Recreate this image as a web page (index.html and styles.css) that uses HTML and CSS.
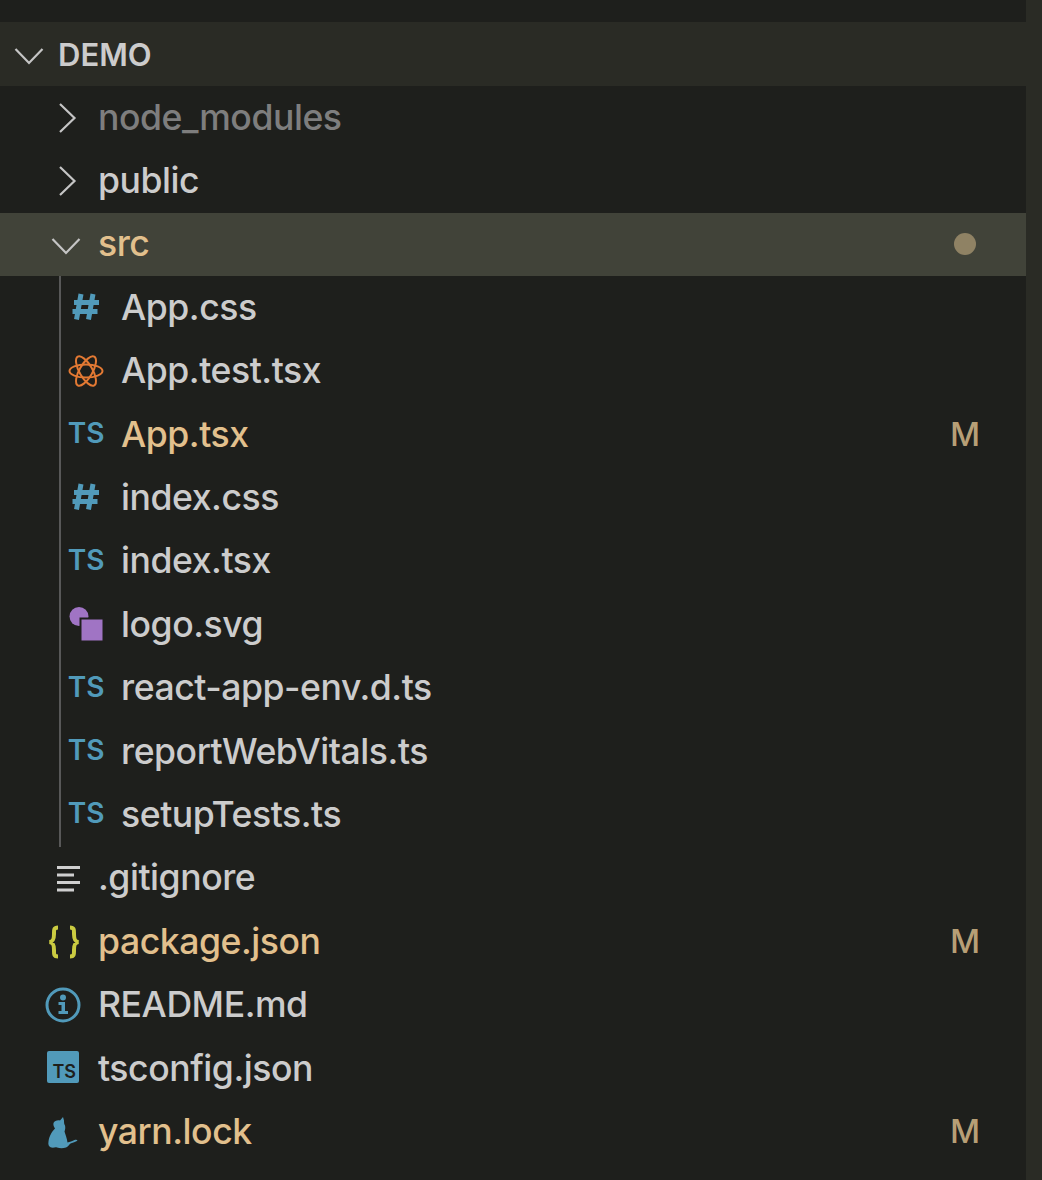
FILE: index.html
```html
<!DOCTYPE html>
<html lang="en">
<head>
<meta charset="utf-8">
<title>Explorer</title>
<link rel="stylesheet" href="styles.css">
</head>
<body>
<div class="explorer">
  <div class="top-gap"></div>
  <div class="header">
    <span class="slot"><svg class="icon" viewBox="0 0 40 40"><path class="chev" d="M8.5 15 22 29 35.500 15"/></svg></span>
    <span class="title">DEMO</span>
  </div>
  <div class="list">
    <div class="row dim">
      <span class="slot"><svg class="icon" viewBox="0 0 40 40"><path class="chev" d="M16 6 30.500 20 16 34"/></svg></span>
      <span class="name">node_modules</span>
    </div>
    <div class="row">
      <span class="slot"><svg class="icon" viewBox="0 0 40 40"><path class="chev" d="M16 6 30.500 20 16 34"/></svg></span>
      <span class="name">public</span>
    </div>
    <div class="row selected modified">
      <span class="slot"><svg class="icon" viewBox="0 0 40 40"><path class="chev" d="M8.5 15 22 29 35.500 15"/></svg></span>
      <span class="name">src</span>
      <span class="status"><span class="dot"></span></span>
    </div>
    <div class="group">
      <div class="row child">
        <span class="slot"><svg class="icon" viewBox="0 0 40 40"><path class="hash" d="M15 6 10.500 31.500M27 6 22.500 31.500M8 14.500H33M6.500 23.500H31.500"/></svg></span>
        <span class="name">App.css</span>
      </div>
      <div class="row child">
        <span class="slot"><svg class="icon" viewBox="0 0 40 40"><g class="react"><ellipse cx="20" cy="20" rx="16.500" ry="6.500"/><ellipse cx="20" cy="20" rx="16.500" ry="6.500" transform="rotate(60 20 20)"/><ellipse cx="20" cy="20" rx="16.500" ry="6.500" transform="rotate(120 20 20)"/></g></svg></span>
        <span class="name">App.test.tsx</span>
      </div>
      <div class="row child modified">
        <span class="slot"><span class="ts">TS</span></span>
        <span class="name">App.tsx</span>
        <span class="status">M</span>
      </div>
      <div class="row child">
        <span class="slot"><svg class="icon" viewBox="0 0 40 40"><path class="hash" d="M15 6 10.500 31.500M27 6 22.500 31.500M8 14.500H33M6.500 23.500H31.500"/></svg></span>
        <span class="name">index.css</span>
      </div>
      <div class="row child">
        <span class="slot"><span class="ts">TS</span></span>
        <span class="name">index.tsx</span>
      </div>
      <div class="row child">
        <span class="slot"><svg class="icon" viewBox="0 0 40 40"><circle class="purple" cx="13" cy="11.500" r="9.500"/><rect class="purple-square" x="14.500" y="13.500" width="23" height="23"/></svg></span>
        <span class="name">logo.svg</span>
      </div>
      <div class="row child">
        <span class="slot"><span class="ts">TS</span></span>
        <span class="name">react-app-env.d.ts</span>
      </div>
      <div class="row child">
        <span class="slot"><span class="ts">TS</span></span>
        <span class="name">reportWebVitals.ts</span>
      </div>
      <div class="row child">
        <span class="slot"><span class="ts">TS</span></span>
        <span class="name">setupTests.ts</span>
      </div>
    </div>
    <div class="row">
      <span class="slot"><svg class="icon" viewBox="0 0 40 40"><path class="lines" d="M13 9.500H36M13 17H30M13 24.500H36M13 32H30"/></svg></span>
      <span class="name">.gitignore</span>
    </div>
    <div class="row modified">
      <span class="slot"><svg class="icon" viewBox="0 0 40 40"><path class="brace" d="M14 5.500C9.500 5.500 10 8 10 12 10 16.500 9.500 19.500 5.500 20 9.500 20.500 10 23.500 10 28 10 32 9.500 34.500 14 34.500M26 5.500C30.500 5.500 30 8 30 12 30 16.500 30.500 19.500 34.500 20 30.500 20.500 30 23.500 30 28 30 32 30.500 34.500 26 34.500"/></svg></span>
      <span class="name">package.json</span>
      <span class="status">M</span>
    </div>
    <div class="row">
      <span class="slot"><svg class="icon" viewBox="0 0 40 40"><circle class="info-ring" cx="19" cy="20" r="16"/><circle class="blue" cx="19" cy="12.500" r="3"/><path class="blue" d="M14.500 17H21V26H24V29H14.500V26H17.500V20H14.500Z"/></svg></span>
      <span class="name">README.md</span>
    </div>
    <div class="row">
      <span class="slot"><span class="ts-box">TS</span></span>
      <span class="name">tsconfig.json</span>
    </div>
    <div class="row modified">
      <span class="slot"><svg class="icon" viewBox="0 0 40 40"><path class="blue" d="M19 5l-3 3.500c-3-.5-5.500.5-6.500 2.500-.5 2 .5 4 1.500 5.500-3 3-6 8-6.500 13-.5 3 0 5 2.500 6 3 .5 4-.5 6 0 3 1 6 1 9 0 2-.5 3-3 4.500-4 3-1 6-2 7-3-.5-1-2-.8-3-.4-2 1-5 2-7 2.500-.5-4-2-8-3-11 .8-2 1-4 .5-6-.8-1-1-3-1-5z"/></svg></span>
      <span class="name">yarn.lock</span>
      <span class="status">M</span>
    </div>
  </div>
</div>
</body>
</html>
```
FILE: styles.css
```css
* {
  box-sizing: border-box;
}

html,
body {
  margin: 0;
  height: 100%;
  overflow: hidden;
}

.explorer {
  height: 1180px;
  display: flex;
  flex-direction: column;
  background: #2a2b25;
  font-family: Inter, "Noto Sans", sans-serif;
  color: #cccccc;
}

.top-gap {
  height: 22px;
  margin-right: 16px;
  background: #1e1f1c;
}

.header {
  height: 64px;
  display: flex;
  align-items: center;
  gap: 11px;
  padding-left: 7px;
}

.title {
  font-size: 31px;
  font-weight: 600;
  color: #cccccc;
}

.list {
  flex: 1;
  margin-right: 16px;
  background: #1e1f1c;
}

.row {
  height: 63.4px;
  display: flex;
  align-items: center;
  gap: 14px;
  padding-left: 44px;
  font-size: 35.6px;
}

.row.child {
  gap: 15px;
  padding-left: 5px;
}

.row.selected {
  background: #414339;
}

.name {
  margin-top: -1px;
  font-weight: 450;
  letter-spacing: -0.45px;
}

.row.dim .name {
  color: #7e7e7e;
}

.row.modified .name {
  color: #e2c08d;
}

.group {
  margin-left: 59px;
  border-left: 2px solid #585858;
}

.slot {
  flex: none;
  width: 40px;
  height: 40px;
  display: flex;
  align-items: center;
  justify-content: center;
}

.icon {
  display: block;
  width: 40px;
  height: 40px;
  overflow: visible;
}

.status {
  margin-left: auto;
  width: 40px;
  margin-right: 41px;
  margin-top: -1px;
  display: flex;
  justify-content: center;
  font-size: 33px;
  font-weight: 500;
  color: #b79f76;
}

.dot {
  width: 22px;
  height: 22px;
  border-radius: 50%;
  background: #8f8264;
}

.chev {
  fill: none;
  stroke: #c5c5c5;
  stroke-width: 2.2;
}

.hash {
  fill: none;
  stroke: #519aba;
  stroke-width: 5;
}

.react {
  fill: none;
  stroke: #e37933;
  stroke-width: 2;
}

.ts {
  margin-top: -3px;
  font-size: 28px;
  font-weight: 600;
  color: #519aba;
}

.ts-box {
  width: 32px;
  height: 32px;
  margin: 0 2px 4px 0;
  padding: 0 3px 0 0;
  display: flex;
  align-items: flex-end;
  justify-content: flex-end;
  border-radius: 2px;
  background: #519aba;
  color: #1e1f1c;
  font-size: 18px;
  font-weight: 600;
  line-height: 1.2;
}

.purple {
  fill: #a074c4;
}

.purple-square {
  fill: #a074c4;
  stroke: #1e1f1c;
  stroke-width: 2;
}

.lines {
  fill: none;
  stroke: #cfcfcf;
  stroke-width: 3;
}

.brace {
  fill: none;
  stroke: #cbcb41;
  stroke-width: 4;
}

.info-ring {
  fill: none;
  stroke: #519aba;
  stroke-width: 3;
}

.blue {
  fill: #519aba;
}
```
